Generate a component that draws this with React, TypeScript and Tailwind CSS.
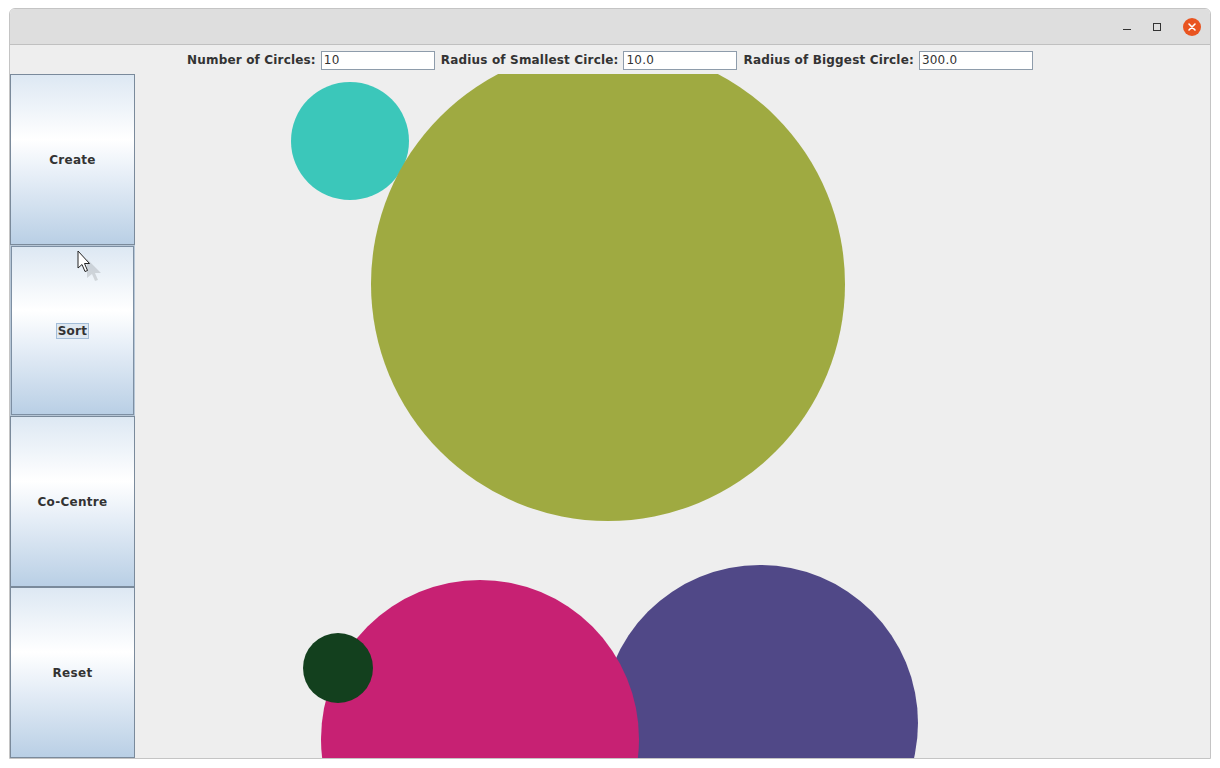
import React from 'react';

const circles = [
  { cx: 215, cy: 67, r: 59, fill: '#3bc7ba' },
  { cx: 473, cy: 210, r: 237, fill: '#9faa41' },
  { cx: 625, cy: 649, r: 158, fill: '#504887' },
  { cx: 345, cy: 665, r: 159, fill: '#c72173' },
  { cx: 203, cy: 594, r: 35, fill: '#13401e' },
];

const fields = [
  { label: 'Number of Circles:', value: '10' },
  { label: 'Radius of Smallest Circle:', value: '10.0' },
  { label: 'Radius of Biggest Circle:', value: '300.0' },
];

function SideButton({ label, focused }: { label: string; focused?: boolean }) {
  const face =
    'flex-1 flex items-center justify-center bg-[linear-gradient(to_bottom,#dde8f3_0%,#ffffff_38%,#e6eef7_60%,#b9cfe5_100%)]';
  if (focused) {
    return (
      <div className="h-[171px] border border-[#b6c6d6] flex">
        <div className={face + ' border border-[#7d8fa3]'}>
          <span className="px-[1px] leading-[14px] border border-[#a3bdd8] bg-[#dfe8f1] text-[#333333] font-bold text-[12px] tracking-[0.25px]">
            {label}
          </span>
        </div>
      </div>
    );
  }
  return (
    <div className={'h-[171px] border border-[#7a8a9b] ' + face}>
      <span className="text-[#333333] font-bold text-[12px] tracking-[0.3px]">{label}</span>
    </div>
  );
}

function Cursor() {
  return (
    <svg className="absolute left-[77px] top-[250px]" width="24" height="32" viewBox="0 0 24 32">
      <path d="M6 6 L20 20 L14 20 L17 27 L14 28 L11 21 L6 25 Z" fill="#000" opacity="0.12" transform="translate(4 3)" />
      <path d="M1 1 L1 18 L5 14.5 L8 21.5 L10.5 20.5 L7.5 13.5 L12.5 13.5 Z" fill="#ffffff" stroke="#222" strokeWidth="1" strokeLinejoin="round" />
    </svg>
  );
}

export default function App() {
  return (
    <div className="relative w-[1220px] h-[768px] bg-white font-['DejaVu_Sans',sans-serif] overflow-hidden">
      <div className="ml-[9px] mt-[8px] w-[1202px] h-[751px] border border-[#c4c4c4] rounded-t-[6px] flex flex-col overflow-hidden">
        {/* title bar */}
        <div className="h-[36px] bg-[#dedede] border-b border-[#c0c0c0] flex items-center justify-end pr-[9px] gap-[18px] shrink-0">
          <div className="w-[8px] h-[1px] bg-[#333] mt-[6px]" />
          <div className="w-[16px] h-[16px] flex items-center justify-center">
            <div className="w-[8px] h-[8px] border border-[#333]" />
          </div>
          <div className="w-[18px] h-[18px] rounded-full bg-[#e95420] flex items-center justify-center">
            <svg width="10" height="10" viewBox="0 0 10 10">
              <path d="M2 2 L8 8 M8 2 L2 8" stroke="#fff" strokeWidth="1.6" strokeLinecap="round" />
            </svg>
          </div>
        </div>

        <div className="flex-1 bg-[#eeeeee] flex flex-col">
          {/* input row */}
          <div className="h-[29px] flex items-center justify-center gap-[5px] pt-[1px]">
            {fields.map((f, i) => (
              <React.Fragment key={i}>
                <span className={'text-[12px] font-bold text-[#333333] tracking-[0.17px] ' + (i > 0 ? 'ml-[1px]' : '')}>{f.label}</span>
                <div className="w-[114px] h-[19px] bg-white border border-[#8e9cab] flex items-center pl-[2px] text-[12px] text-[#333333] tracking-[0.2px]">
                  {f.value}
                </div>
              </React.Fragment>
            ))}
          </div>

          <div className="flex-1 flex">
            <div className="w-[125px] flex flex-col">
              <SideButton label="Create" />
              <SideButton label="Sort" focused />
              <SideButton label="Co-Centre" />
              <SideButton label="Reset" />
            </div>
            <div className="flex-1 relative overflow-hidden">
              <svg width="1075" height="684" className="block">
                {circles.map((c, i) => (
                  <circle key={i} cx={c.cx} cy={c.cy} r={c.r} fill={c.fill} />
                ))}
              </svg>
            </div>
          </div>
        </div>
      </div>
      <Cursor />
    </div>
  );
}
